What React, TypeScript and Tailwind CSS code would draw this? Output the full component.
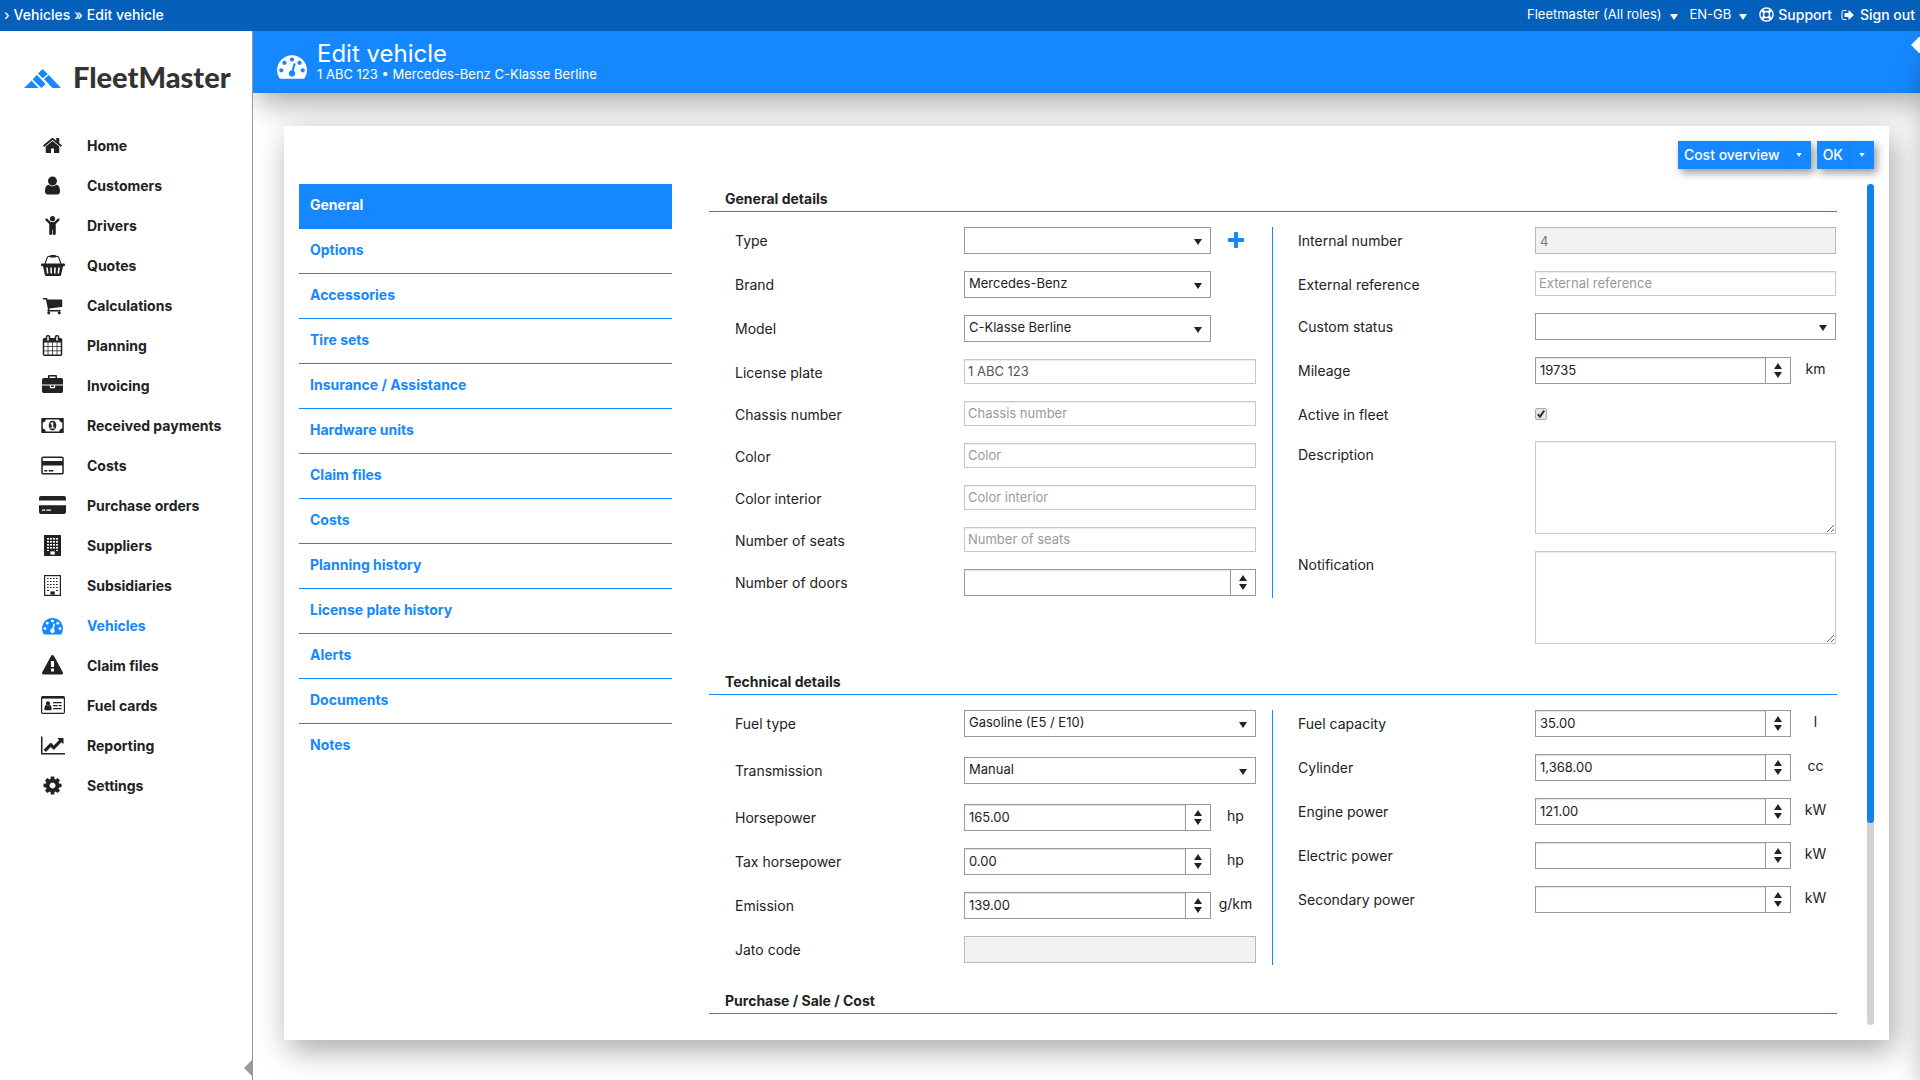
import { useId, type ReactNode } from 'react';
import { FaChild, FaRegLifeRing } from 'react-icons/fa';
import clsx from 'clsx';

interface IconProps {
  className?: string;
}

interface GlyphProps extends IconProps {
  box: string;
  d: string;
}

function Glyph({ box, d, className }: GlyphProps) {
  return (
    <svg viewBox={box} className={className} fill="currentColor" aria-hidden="true">
      <path d={d} />
    </svg>
  );
}

const GAUGE =
  'M384 1152q0-53-37.5-90.5t-90.5-37.5-90.5 37.5-37.5 90.5 37.5 90.5 90.5 37.5 90.5-37.5 37.5-90.5zm192-448q0-53-37.5-90.5t-90.5-37.5-90.5 37.5-37.5 90.5 37.5 90.5 90.5 37.5 90.5-37.5 37.5-90.5zm428 481l101-382q6-26-7.5-48.5t-38.5-29.5-48 6.5-30 39.5l-101 382q-60 5-107 43.5t-63 98.5q-20 77 20 146t117 89 146-20 89-117q16-60-6-117t-72-91zm660-33q0-53-37.5-90.5t-90.5-37.5-90.5 37.5-37.5 90.5 37.5 90.5 90.5 37.5 90.5-37.5 37.5-90.5zm-640-640q0-53-37.5-90.5t-90.5-37.5-90.5 37.5-37.5 90.5 37.5 90.5 90.5 37.5 90.5-37.5 37.5-90.5zm448 192q0-53-37.5-90.5t-90.5-37.5-90.5 37.5-37.5 90.5 37.5 90.5 90.5 37.5 90.5-37.5 37.5-90.5zm320 448q0 261-141 483-19 29-54 29h-1402q-35 0-54-29-141-221-141-483 0-182 71-348t191-286 286-191 348-71 348 71 286 191 191 286 71 348z';

const HomeIcon = () => (
  <Glyph
    box="0 0 1792 1792"
    className="size-[21px]"
    d="M1472 992v480q0 26-19 45t-45 19h-384v-384h-256v384h-384q-26 0-45-19t-19-45v-480q0-1 .5-3t.5-3l575-474 575 474q1 2 1 6zm223-69l-62 74q-8 9-21 11h-3q-13 0-21-7l-692-577-692 577q-12 8-24 7-13-2-21-11l-62-74q-8-10-7-23.5t11-21.5l719-599q32-26 76-26t76 26l244 204v-195q0-14 9-23t23-9h192q14 0 23 9t9 23v408l219 182q10 8 11 21.5t-7 23.5z"
  />
);

const UserIcon = () => (
  <Glyph
    box="0 0 1792 1792"
    className="size-[21px]"
    d="M1536 1399q0 109-62.5 187t-150.5 78h-854q-88 0-150.5-78t-62.5-187q0-85 8.5-160.5t31.5-152 58.5-131 94-89 134.5-34.5q131 128 313 128t313-128q76 0 134.5 34.5t94 89 58.5 131 31.5 152 8.5 160.5zm-256-887q0 159-112.5 271.5t-271.5 112.5-271.5-112.5-112.5-271.5 112.5-271.5 271.5-112.5 271.5 112.5 112.5 271.5z"
  />
);

const BasketIcon = () => (
  <svg viewBox="0 0 24 21" className="h-[21px] w-6" fill="currentColor" aria-hidden="true">
    <path d="M4 9 6.2 2.6Q6.6 1.4 8 1.4h8q1.4 0 1.8 1.2L20 9" fill="none" stroke="currentColor" strokeWidth="1.1" />
    <rect x="9" y="0" width="6" height="2.6" rx="1.2" />
    <rect x="0" y="8.6" width="24" height="2.6" rx="1.2" />
    <path
      fillRule="evenodd"
      d="M1.9 10.5h20.2l-1.9 9.2q-.3 1.3-1.6 1.3H5.4q-1.3 0-1.6-1.3zM5.2 12.6l.7 6h1.5l-.6-6zM9.2 12.6l.3 6H11l-.2-6zM13.2 12.6l-.2 6h1.5l.3-6zM17.2 12.6l-.6 6h1.5l.7-6z"
    />
  </svg>
);

const CartIcon = () => (
  <Glyph
    box="0 0 1792 1792"
    className="size-[21px]"
    d="M704 1536q0 52-38 90t-90 38-90-38-38-90 38-90 90-38 90 38 38 90zm896 0q0 52-38 90t-90 38-90-38-38-90 38-90 90-38 90 38 38 90zm128-1088v512q0 24-16.5 42.5t-40.5 21.5l-1044 122q13 60 13 70 0 16-24 64h920q26 0 45 19t19 45-19 45-45 19h-1024q-26 0-45-19t-19-45q0-11 8-31.5t16-36 21.5-40 15.5-29.5l-177-823h-204q-26 0-45-19t-19-45 19-45 45-19h256q16 0 28.5 6.5t19.5 15.5 13 24.5 8 26 5.5 29.5 4.5 26h1201q26 0 45 19t19 45z"
  />
);

const CalendarIcon = () => (
  <Glyph
    box="0 0 1792 1792"
    className="size-[21px]"
    d="M192 1664h288v-288h-288v288zm352 0h320v-288h-320v288zm-352-352h288v-320h-288v320zm352 0h320v-320h-320v320zm-352-384h288v-288h-288v288zm736 736h320v-288h-320v288zm-384-736h320v-288h-320v288zm768 736h288v-288h-288v288zm-384-352h320v-320h-320v320zm-352-864v-288q0-13-9.5-22.5t-22.5-9.5h-64q-13 0-22.5 9.5t-9.5 22.5v288q0 13 9.5 22.5t22.5 9.5h64q13 0 22.5-9.5t9.5-22.5zm736 864h288v-320h-288v320zm-384-384h320v-288h-320v288zm384 0h288v-288h-288v288zm32-480v-288q0-13-9.5-22.5t-22.5-9.5h-64q-13 0-22.5 9.5t-9.5 22.5v288q0 13 9.5 22.5t22.5 9.5h64q13 0 22.5-9.5t9.5-22.5zm384-64v1280q0 52-38 90t-90 38h-1408q-52 0-90-38t-38-90v-1280q0-52 38-90t90-38h128v-96q0-66 47-113t113-47h64q66 0 113 47t47 113v96h384v-96q0-66 47-113t113-47h64q66 0 113 47t47 113v96h128q52 0 90 38t38 90z"
  />
);

const BriefcaseIcon = () => (
  <Glyph
    box="0 0 1792 1792"
    className="size-[21px]"
    d="M640 256h512v-128h-512v128zm1152 640v480q0 66-47 113t-113 47h-1472q-66 0-113-47t-47-113v-480h672v160q0 26 19 45t45 19h320q26 0 45-19t19-45v-160h672zm-768 0v128h-256v-128h256zm768-480v384h-1792v-384q0-66 47-113t113-47h352v-160q0-40 28-68t68-28h576q40 0 68 28t28 68v160h352q66 0 113 47t47 113z"
  />
);

const MoneyIcon = () => (
  <Glyph
    box="0 0 1920 1792"
    className="h-[21px] w-[23px]"
    d="M768 1152h384v-96h-128v-448h-114l-148 137 77 80q42-37 55-57h2v288h-128v96zm512-256q0 70-21 142t-59.5 134-101.5 101-138 39-138-39-101.5-101-59.5-134-21-142 21-142 59.5-134 101.5-101 138-39 138 39 101.5 101 59.5 134 21 142zm512 256v-512q-106 0-181-75t-75-181h-1152q0 106-75 181t-181 75v512q106 0 181 75t75 181h1152q0-106 75-181t181-75zm128-832v1152q0 26-19 45t-45 19h-1792q-26 0-45-19t-19-45v-1152q0-26 19-45t45-19h1792q26 0 45 19t19 45z"
  />
);

const CardIcon = () => (
  <Glyph
    box="0 0 1920 1792"
    className="h-[21px] w-[23px]"
    d="M1760 128q66 0 113 47t47 113v1216q0 66-47 113t-113 47h-1600q-66 0-113-47t-47-113v-1216q0-66 47-113t113-47h1600zm-1600 128q-13 0-22.5 9.5t-9.5 22.5v224h1664v-224q0-13-9.5-22.5t-22.5-9.5h-1600zm1600 1280q13 0 22.5-9.5t9.5-22.5v-608h-1664v608q0 13 9.5 22.5t22.5 9.5h1600zm-1504-128v-128h256v128h-256zm384 0v-128h384v128h-384z"
  />
);

const SolidCardIcon = () => (
  <svg viewBox="0 0 27 18" className="h-[18px] w-[27px]" fill="currentColor" aria-hidden="true">
    <path d="M2 0h23a2 2 0 0 1 2 2v2.6H0V2a2 2 0 0 1 2-2z" />
    <path fillRule="evenodd" d="M0 9.2h27V16a2 2 0 0 1-2 2H2a2 2 0 0 1-2-2zM3 13.6v1.2h3.2v-1.2zM7.4 13.6v1.2H12v-1.2z" />
  </svg>
);

const WINDOW_ROWS = [3, 6, 9, 12];
const WINDOW_COLS = [3, 6, 9, 12];

function BuildingIcon({ solid = false }: { solid?: boolean }) {
  return (
    <svg viewBox="0 0 17 21" className="h-[21px] w-[17px]" aria-hidden="true">
      <rect x="0.6" y="0.6" width="15.8" height="19.8" fill={solid ? 'currentColor' : 'white'} stroke="currentColor" strokeWidth="1.2" />
      {WINDOW_ROWS.map((y) =>
        WINDOW_COLS.map((x) => (
          <rect
            key={`${x}-${y}`}
            x={x}
            y={y}
            width={solid ? 2 : 1.6}
            height={solid ? 1.6 : 1}
            fill={solid ? 'white' : 'currentColor'}
          />
        ))
      )}
      <rect x="3" y="15" width="2" height="1" fill={solid ? 'white' : 'currentColor'} />
      <rect x="12" y="15" width="2" height="1" fill={solid ? 'white' : 'currentColor'} />
      <rect x="6.4" y="16.4" width="4.4" height="3.2" fill={solid ? 'white' : 'currentColor'} />
    </svg>
  );
}

const WarningIcon = () => (
  <Glyph
    box="0 0 1792 1792"
    className="size-[21px]"
    d="M1024 1375v-190q0-14-9.5-23.5t-22.5-9.5h-192q-13 0-22.5 9.5t-9.5 23.5v190q0 14 9.5 23.5t22.5 9.5h192q13 0 22.5-9.5t9.5-23.5zm-2-374l18-459q0-12-10-19-13-11-24-11h-220q-11 0-24 11-10 7-10 21l17 457q0 10 10 16.5t24 6.5h185q14 0 23.5-6.5t10.5-16.5zm-14-934l768 1408q35 63-2 126-17 29-46.5 46t-63.5 17h-1536q-34 0-63.5-17t-46.5-46q-37-63-2-126l768-1408q17-31 47-49t65-18 65 18 47 49z"
  />
);

const IdCardIcon = () => (
  <svg viewBox="0 0 24 18" className="h-[18px] w-6" fill="currentColor" aria-hidden="true">
    <rect x="0.6" y="0.6" width="22.8" height="16.8" rx="1.2" fill="none" stroke="currentColor" strokeWidth="1.2" />
    <rect x="1" y="0.6" width="22" height="2" />
    <circle cx="7" cy="7.4" r="2.1" />
    <path d="M3.4 13.4q0-4.2 1.8-4.4 1.8 1 3.6 0 1.8.2 1.8 4.4 0 .8-.9.8H4.3q-.9 0-.9-.8z" />
    <path d="M12.2 6h8.4v1.2h-8.4zM12.2 9h4.4v1.2h-4.4zM17.8 9h2.8v1.2h-2.8zM12.2 12h8.4v1.2h-8.4z" />
  </svg>
);

const ChartIcon = () => (
  <Glyph
    box="0 0 2048 1792"
    className="h-[21px] w-6"
    d="M2048 1536v128h-2048v-1536h128v1408h1920zm-128-1248v435q0 21-19.5 29.5t-35.5-7.5l-121-121-633 633q-10 10-23 10t-23-10l-233-233-416 416-192-192 585-585q10-10 23-10t23 10l233 233 464-464-121-121q-16-16-7.5-35.5t29.5-19.5h435q14 0 23 9t9 23z"
  />
);

const CogIcon = () => (
  <Glyph
    box="0 0 1792 1792"
    className="size-[21px]"
    d="M1152 896q0-106-75-181t-181-75-181 75-75 181 75 181 181 75 181-75 75-181zm512-109v222q0 12-8 23t-20 13l-185 28q-19 54-39 91 35 50 107 138 10 12 10 25t-9 23q-27 37-99 108t-94 71q-12 0-26-9l-138-108q-44 23-91 38-16 136-29 186-7 28-36 28h-222q-14 0-24.5-8.5t-11.5-21.5l-28-184q-49-16-90-37l-141 107q-10 9-25 9-14 0-25-11-126-114-165-168-7-10-7-23 0-12 8-23 15-21 51-66.5t54-70.5q-27-50-41-99l-183-27q-13-2-21-12.5t-8-23.5v-222q0-12 8-23t19-13l186-28q14-46 39-92-40-57-107-138-10-12-10-24 0-10 9-23 26-36 98.5-107.5t94.5-71.5q13 0 26 10l138 107q44-23 91-38 16-136 29-186 7-28 36-28h222q14 0 24.5 8.5t11.5 21.5l28 184q49 16 90 37l142-107q9-9 24-9 13 0 25 10 129 119 165 170 7 8 7 22 0 12-8 23-15 21-51 66.5t-54 70.5q26 50 41 98l183 28q13 2 21 12.5t8 23.5z"
  />
);

const SignOutIcon = () => (
  <Glyph
    box="0 128 1664 1536"
    className="h-3 w-[13px]"
    d="M704 1440q0 4 1 20t.5 26.5-3 23.5-10 19.5-20.5 6.5h-320q-119 0-203.5-84.5t-84.5-203.5v-704q0-119 84.5-203.5t203.5-84.5h320q13 0 22.5 9.5t9.5 22.5q0 4 1 20t.5 26.5-3 23.5-10 19.5-20.5 6.5h-320q-66 0-113 47t-47 113v704q0 66 47 113t113 47h312l11.5 1 11.5 3 8 5.5 7 9 2 13.5zm928-544q0 26-19 45l-544 544q-19 19-45 19t-45-19-19-45v-288h-448q-26 0-45-19t-19-45v-384q0-26 19-45t45-19h448v-288q0-26 19-45t45-19 45 19l544 544q19 19 19 45z"
  />
);

const DownArrow = ({ className }: IconProps) => <Glyph box="0 0 8 6" d="M0 0h8L4 6z" className={className} />;
const UpArrow = ({ className }: IconProps) => <Glyph box="0 0 8 6" d="M0 6h8L4 0z" className={className} />;
const LeftArrow = ({ className }: IconProps) => <Glyph box="0 0 9 16" d="M9 0v16L8 16 0 8 8 0z" className={className} />;

const navItems: { label: string; icon: ReactNode; active?: boolean }[] = [
  { label: 'Home', icon: <HomeIcon /> },
  { label: 'Customers', icon: <UserIcon /> },
  { label: 'Drivers', icon: <FaChild className="size-[19px]" /> },
  { label: 'Quotes', icon: <BasketIcon /> },
  { label: 'Calculations', icon: <CartIcon /> },
  { label: 'Planning', icon: <CalendarIcon /> },
  { label: 'Invoicing', icon: <BriefcaseIcon /> },
  { label: 'Received payments', icon: <MoneyIcon /> },
  { label: 'Costs', icon: <CardIcon /> },
  { label: 'Purchase orders', icon: <SolidCardIcon /> },
  { label: 'Suppliers', icon: <BuildingIcon solid /> },
  { label: 'Subsidiaries', icon: <BuildingIcon /> },
  { label: 'Vehicles', icon: <Glyph box="0 0 1792 1792" d={GAUGE} className="size-[21px]" />, active: true },
  { label: 'Claim files', icon: <WarningIcon /> },
  { label: 'Fuel cards', icon: <IdCardIcon /> },
  { label: 'Reporting', icon: <ChartIcon /> },
  { label: 'Settings', icon: <CogIcon /> },
];

const tabs = [
  'General',
  'Options',
  'Accessories',
  'Tire sets',
  'Insurance / Assistance',
  'Hardware units',
  'Claim files',
  'Costs',
  'Planning history',
  'License plate history',
  'Alerts',
  'Documents',
  'Notes',
];

interface FieldProps {
  label: string;
  className?: string;
  children: (id: string) => ReactNode;
}

/** Label on the left, control on the right. The label width comes from the column. */
function Field({ label, className, children }: FieldProps) {
  const id = useId();
  return (
    <div className={clsx('flex items-start', className)}>
      <label htmlFor={id} className="w-(--label) shrink-0 pt-[2px] leading-[23px]">
        {label}
      </label>
      <div className="flex min-w-0 flex-1">{children(id)}</div>
    </div>
  );
}

function TextField({ label, value }: { label: string; value?: string }) {
  return (
    <Field label={label}>
      {(id) => (
        <input
          id={id}
          type="text"
          placeholder={label}
          defaultValue={value}
          className="h-[25px] w-full border border-[#c8c8c8] px-[3px] pb-px text-[13px] text-[#555] shadow-[inset_0_1px_1px_rgba(0,0,0,0.08)] placeholder:text-[#999] focus:outline-none"
        />
      )}
    </Field>
  );
}

function DisabledField({ label, value }: { label: string; value?: string }) {
  return (
    <Field label={label}>
      {(id) => (
        <input
          id={id}
          type="text"
          disabled
          defaultValue={value}
          className="h-[27px] w-full border border-[#b8b8b8] bg-[#f2f2f2] px-1 text-[13px] text-[#777]"
        />
      )}
    </Field>
  );
}

function SelectField({ label, value, action, className }: { label: string; value?: string; action?: ReactNode; className?: string }) {
  return (
    <Field label={label} className={className}>
      {(id) => (
        <>
          <div className="relative flex-1">
            <select
              id={id}
              className="block h-[27px] w-full appearance-none border border-[#999] bg-white px-1 pb-[2px] text-[13px] focus:outline-none"
            >
              <option>{value}</option>
            </select>
            <DownArrow className="pointer-events-none absolute top-3 right-[9px] h-[6px] w-2" />
          </div>
          {action !== undefined && <div className="flex h-[27px] w-[45px] justify-center pb-[2px] pl-1">{action}</div>}
        </>
      )}
    </Field>
  );
}

function NumberField({ label, value, unit }: { label: string; value?: string; unit?: string }) {
  return (
    <Field label={label}>
      {(id) => (
        <>
          <div className="flex h-[27px] min-w-0 flex-1 border border-[#999]">
            <input
              id={id}
              type="text"
              inputMode="decimal"
              defaultValue={value}
              className="min-w-0 flex-1 px-1 text-[13px] shadow-[inset_0_1px_1px_rgba(0,0,0,0.12)] focus:outline-none"
            />
            <div className="flex w-[25px] flex-col items-center justify-center gap-[3px] border-l border-[#999]">
              <button type="button" aria-label={`Increase ${label}`}>
                <UpArrow className="h-[6px] w-2" />
              </button>
              <button type="button" aria-label={`Decrease ${label}`}>
                <DownArrow className="h-[6px] w-2" />
              </button>
            </div>
          </div>
          {unit && <span className="w-[45px] pl-1 text-center leading-[23px]">{unit}</span>}
        </>
      )}
    </Field>
  );
}

function AreaField({ label }: { label: string }) {
  return (
    <Field label={label}>
      {(id) => (
        <textarea
          id={id}
          className="block h-[93px] w-full border border-[#c8c8c8] shadow-[inset_0_1px_1px_rgba(0,0,0,0.08)] focus:outline-none"
        />
      )}
    </Field>
  );
}

function Section({ title, left, right }: { title: string; left?: ReactNode; right?: ReactNode }) {
  return (
    <section>
      <h2 className="flex h-7 items-end border-b border-[#1588ff] pl-4 leading-6 font-bold">{title}</h2>
      {left && (
        <div className="mt-[15px] mb-[22px] grid grid-cols-2 items-start">
          <div className="-mb-px flex flex-col gap-[17px] border-r border-[#1588ff] pr-4 pb-[2px] pl-[26px] [--label:229px]">{left}</div>
          <div className="flex flex-col gap-[17px] pr-px pb-px pl-[25px] [--label:237px]">{right}</div>
        </div>
      )}
    </section>
  );
}

function TopBar() {
  return (
    <header className="z-20 flex h-[31px] shrink-0 items-center justify-between bg-[#0560bb] pr-[5px] pb-[2px] pl-1 font-medium text-white">
      <nav className="flex items-center gap-1" aria-label="Breadcrumb">
        <span>›</span>
        <a href="#vehicles">Vehicles</a>
        <span>»</span>
        <a href="#edit">Edit vehicle</a>
      </nav>
      <div className="flex items-center">
        <button type="button" className="flex items-center gap-2 text-[13px] font-normal">
          Fleetmaster (All roles)
          <DownArrow className="mt-1 h-[6px] w-2" />
        </button>
        <button type="button" className="ml-3 flex items-center gap-2 text-[13px] font-normal">
          EN-GB
          <DownArrow className="mt-1 h-[6px] w-2" />
        </button>
        <a href="#support" className="ml-3 flex items-center gap-1">
          <FaRegLifeRing className="size-[15px]" />
          Support
        </a>
        <a href="#signout" className="ml-[9px] flex items-center gap-[6px]">
          <SignOutIcon />
          Sign out
        </a>
      </div>
    </header>
  );
}

function Sidebar() {
  return (
    <aside className="relative z-10 w-[253px] shrink-0 border-r border-[#999] bg-white">
      <a href="#home" className="flex h-[94px] items-center gap-3 pl-6">
        <svg viewBox="0 0 37 19" className="h-[19px] w-[37px]" fill="#1588ff" aria-hidden="true">
          <path d="M18.6 0 23.8 5 18.8 9.2 14 4.6z" />
          <path d="M12.8 5.8 21.6 15 17.4 19 8.6 10.6z" />
          <path d="M7.6 11.6 14.4 19H0z" />
          <path d="M24.8 6 37 19h-8.6L20 10z" />
        </svg>
        <span className="pb-[2px] font-[Lato] text-[29px] font-black text-[#333]">FleetMaster</span>
      </a>
      <nav>
        {navItems.map((item) => (
          <a key={item.label} href="#nav" className={clsx('flex h-10 items-center font-bold', item.active && 'text-[#1588ff]')}>
            <span className="ml-[37px] flex w-[31px] justify-center">{item.icon}</span>
            <span className="ml-[19px]">{item.label}</span>
          </a>
        ))}
      </nav>
      <button type="button" aria-label="Collapse menu" className="absolute -right-px bottom-1 text-[#999]">
        <LeftArrow className="h-4 w-[9px]" />
      </button>
    </aside>
  );
}

function SplitButton({ label }: { label: string }) {
  return (
    <div className="flex h-7 bg-[#1588ff] text-white shadow-[3px_4px_8px_rgba(0,0,0,0.4)]">
      <button type="button" className="px-[6px] pb-px font-medium">
        {label}
      </button>
      <button type="button" aria-label={`${label} options`} className="flex w-[25px] items-center justify-center border-l border-[#1280f2]">
        <DownArrow className="h-1 w-2" />
      </button>
    </div>
  );
}

export default function App() {
  return (
    <div className="flex h-screen flex-col overflow-hidden bg-white font-[Inter,sans-serif] text-[14px] text-[#222]">
      <TopBar />
      <div className="flex min-h-0 flex-1">
        <Sidebar />
        <main className="relative flex min-w-0 flex-1 flex-col">
          <div className="flex h-[62px] shrink-0 bg-[#1588ff] pl-6 text-white shadow-[5px_10px_30px_rgba(0,0,0,0.35)]">
            <Glyph box="0 0 1792 1792" d={GAUGE} className="mt-[20px] size-[30px]" />
            <div className="ml-[10px]">
              <h1 className="mt-[9px] text-[24px] leading-7">Edit vehicle</h1>
              <p className="text-[13px] leading-3">1 ABC 123 • Mercedes-Benz C-Klasse Berline</p>
            </div>
          </div>

          <div className="mx-[31px] mt-[33px] mb-10 flex min-h-0 flex-1 flex-col bg-white p-[15px] shadow-[5px_10px_30px_rgba(0,0,0,0.35)]">
            <div className="flex justify-end gap-[6px]">
              <SplitButton label="Cost overview" />
              <SplitButton label="OK" />
            </div>

            <div className="mt-[15px] flex min-h-0 flex-1">
              <nav className="w-[373px] shrink-0">
                {tabs.map((tab, i) => (
                  <a
                    key={tab}
                    href="#tab"
                    className={clsx(
                      'block h-[45px] border-[#1588ff] px-[11px] leading-[42px] font-bold',
                      i === 0 ? 'bg-[#1588ff] text-white' : 'text-[#1588ff]',
                      i < tabs.length - 1 && 'border-b'
                    )}
                  >
                    {tab}
                  </a>
                ))}
              </nav>

              <form className="ml-[37px] min-w-0 flex-1 overflow-hidden">
                <Section
                  title="General details"
                  left={
                    <>
                      <SelectField
                        label="Type"
                        action={
                          <button type="button" aria-label="Add type" className="text-[#1588ff]">
                            <Glyph box="0 0 16 16" d="M6 0h4v6h6v4h-6v6H6v-6H0V6h6z" className="size-4" />
                          </button>
                        }
                      />
                      <SelectField label="Brand" value="Mercedes-Benz" action="" />
                      <SelectField label="Model" value="C-Klasse Berline" action="" />
                      <TextField label="License plate" value="1 ABC 123" />
                      <TextField label="Chassis number" />
                      <TextField label="Color" />
                      <TextField label="Color interior" />
                      <TextField label="Number of seats" />
                      <NumberField label="Number of doors" />
                    </>
                  }
                  right={
                    <>
                      <DisabledField label="Internal number" value="4" />
                      <TextField label="External reference" />
                      <SelectField label="Custom status" />
                      <NumberField label="Mileage" value="19735" unit="km" />
                      <Field label="Active in fleet" className="h-[23px]">
                        {(id) => (
                          <div className="relative mt-[7px] size-3">
                            <input
                              id={id}
                              type="checkbox"
                              defaultChecked
                              className="peer block size-3 appearance-none rounded-[2px] border border-[#aaa] bg-[#e4e4e4]"
                            />
                            <svg
                              viewBox="0 0 12 12"
                              className="pointer-events-none absolute inset-0 hidden size-3 peer-checked:block"
                              fill="none"
                              stroke="#333"
                              strokeWidth="2"
                              aria-hidden="true"
                            >
                              <path d="M2.8 6.2 5 8.6 9.2 2.6" />
                            </svg>
                          </div>
                        )}
                      </Field>
                      <AreaField label="Description" />
                      <AreaField label="Notification" />
                    </>
                  }
                />
                <Section
                  title="Technical details"
                  left={
                    <>
                      <SelectField label="Fuel type" value="Gasoline (E5 / E10)" className="mb-[3px]" />
                      <SelectField label="Transmission" value="Manual" className="mb-[3px]" />
                      <NumberField label="Horsepower" value="165.00" unit="hp" />
                      <NumberField label="Tax horsepower" value="0.00" unit="hp" />
                      <NumberField label="Emission" value="139.00" unit="g/km" />
                      <DisabledField label="Jato code" />
                    </>
                  }
                  right={
                    <>
                      <NumberField label="Fuel capacity" value="35.00" unit="l" />
                      <NumberField label="Cylinder" value="1,368.00" unit="cc" />
                      <NumberField label="Engine power" value="121.00" unit="kW" />
                      <NumberField label="Electric power" unit="kW" />
                      <NumberField label="Secondary power" unit="kW" />
                    </>
                  }
                />
                <Section title="Purchase / Sale / Cost" />
              </form>

              {/* Scroll track of the form */}
              <div className="ml-[30px] w-[7px] shrink-0 rounded-full bg-[#d2d2d2]">
                <div className="h-[76%] rounded-full bg-[#1280ee]" />
              </div>
            </div>
          </div>

          {/* Closed drawer on the right edge, only its handle and shadow show */}
          <div className="absolute top-[22px] bottom-0 left-full w-10 bg-white shadow-[5px_10px_30px_rgba(0,0,0,0.35)]" />
          <button type="button" aria-label="Open panel" className="absolute top-[6px] right-0 text-white">
            <LeftArrow className="h-4 w-[9px]" />
          </button>
        </main>
      </div>
    </div>
  );
}
